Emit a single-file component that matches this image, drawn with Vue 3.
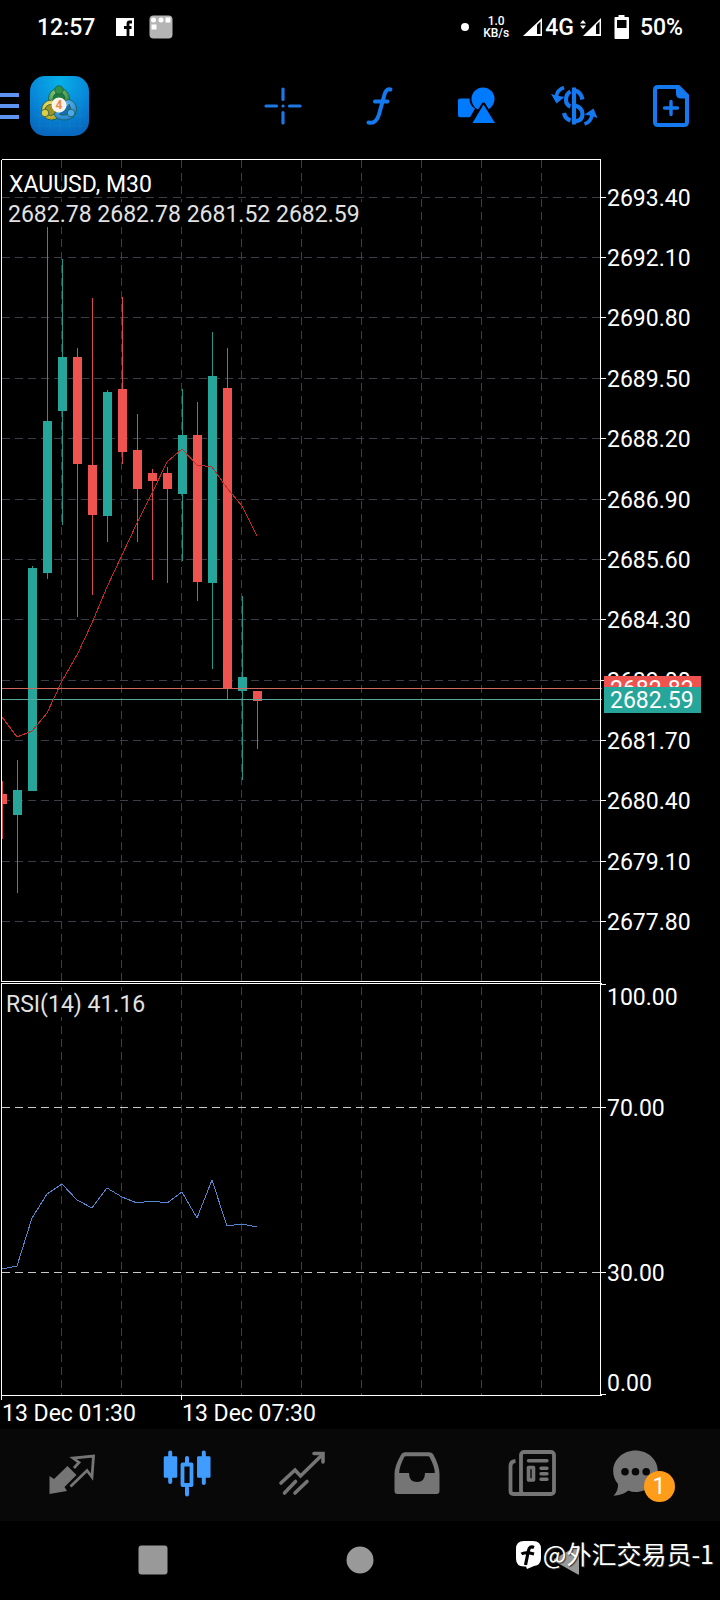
<script setup>
const UP = '#26a69a'
const DOWN = '#ef5350'

// Price scale: label and height on the chart
const prices = [
  ['2693.40', 197], ['2692.10', 257], ['2690.80', 317], ['2689.50', 378],
  ['2688.20', 438], ['2686.90', 499], ['2685.60', 559], ['2684.30', 619],
  ['2683.00', 680], ['2681.70', 740], ['2680.40', 800], ['2679.10', 861],
  ['2677.80', 921],
].map(([label, y]) => ({ label, y }))

const columns = [61, 121, 181, 241, 301, 361, 421, 481, 541]

const levels = [
  { label: '70.00', y: 1107 },
  { label: '30.00', y: 1272 },
]

// high, body top, body bottom, low, rising
const candles = [
  [781, 794, 804, 839, 0], [760, 790, 815, 893, 1], [566, 568, 791, 791, 1],
  [227, 421, 573, 579, 1], [259, 357, 411, 525, 1], [348, 357, 464, 617, 0],
  [298, 465, 515, 595, 0], [390, 392, 516, 542, 1], [297, 389, 452, 464, 0],
  [414, 450, 489, 542, 0], [469, 473, 481, 580, 0], [467, 473, 489, 583, 0],
  [389, 435, 494, 561, 1], [402, 435, 582, 601, 0], [332, 376, 583, 669, 1],
  [348, 388, 689, 699, 0], [596, 677, 691, 780, 1], [691, 691, 701, 749, 0],
].map(([high, top, bottom, low, rising], i) => ({
  x: 2 + i * 15, high, top, bottom, low, color: rising ? UP : DOWN,
}))

const average = '2,717 17,737 32,731 47,713 62,681 78,653 92,623 107,587 122,555 137,523 152,493 167,462 182,449 197,465 212,467 227,488 242,506 257,536'
const rsi = '2,1269 17,1266 32,1218 47,1194 62,1184 77,1200 92,1208 107,1188 122,1197 137,1203 152,1201 167,1203 182,1192 197,1218 212,1180 227,1226 242,1224 257,1227'
</script>

<template>
  <div class="screen">
    <div class="status">
      <span class="clock">12:57</span>
      <svg class="fb" width="18" height="18" viewBox="0 0 18 18">
        <rect width="18" height="18" fill="#fff" />
        <path d="M16 4h-2.5c-1.2 0-1.5.6-1.5 1.6V18M8 9.5h7.5" fill="none" stroke="#000" stroke-width="2.8" />
      </svg>
      <svg class="tile" width="24" height="24" viewBox="0 0 24 24">
        <rect x="0.5" y="0.5" width="23" height="23" rx="4" fill="#b5b5b5" />
        <circle cx="4.5" cy="5" r="2.5" fill="#fff" /><circle cx="12" cy="5" r="2.5" fill="#fff" />
        <rect x="16.5" y="2.5" width="5" height="5" fill="#fff" /><rect x="2.5" y="9.500" width="5" height="5" fill="#fff" />
      </svg>
      <span class="spring"></span>
      <span class="dot"></span>
      <span class="speed"><span>1.0</span><span>KB/s</span></span>
      <svg width="20" height="20" viewBox="0 0 20 20">
        <path d="M0 19L19 1v18z" fill="#fff" /><path d="M14 8l3.500-3.500V17H14z" fill="#000" />
      </svg>
      <span class="net">4G</span>
      <svg class="second" width="22" height="20" viewBox="0 0 22 20">
        <path d="M3 19L21 1v18z" fill="#fff" /><path d="M16 8l3.500-3.500V17H16z" fill="#000" />
        <path d="M0 6.500l3-3.500 3 3.500zM0 8.500l3 3.500 3-3.500z" fill="#fff" />
      </svg>
      <svg class="battery" width="16" height="24" viewBox="0 0 16 24">
        <path d="M4.500 0h6v2H14q1 0 1 1v20q0 1-1 1H1.500q-1 0-1-1V3q0-1 1-1h3z" fill="#fff" />
        <rect x="3" y="5" width="9.500" height="8" fill="#000" />
      </svg>
      <span class="percent">50%</span>
    </div>

    <header class="toolbar">
      <div class="lead">
        <button class="menu" aria-label="Menu"><i></i><i></i><i></i></button>
        <svg class="logo" width="60" height="60" viewBox="0 0 60 60">
          <defs>
            <radialGradient id="sky" cx="0.5" cy="0.1" r="0.9">
              <stop offset="0" stop-color="#06b0ea" /><stop offset="0.55" stop-color="#0788d8" /><stop offset="1" stop-color="#0767bd" />
            </radialGradient>
            <radialGradient id="leaf" cx="0.4" cy="0.3" r="0.8"><stop offset="0" stop-color="#8fd07a" /><stop offset="1" stop-color="#237c38" /></radialGradient>
            <radialGradient id="gold" cx="0.4" cy="0.3" r="0.8"><stop offset="0" stop-color="#f3e66c" /><stop offset="1" stop-color="#a9981e" /></radialGradient>
            <radialGradient id="aqua" cx="0.4" cy="0.3" r="0.8"><stop offset="0" stop-color="#7cc6f5" /><stop offset="1" stop-color="#1479c8" /></radialGradient>
          </defs>
          <rect x="0" y="0" width="59" height="60" rx="15" fill="url(#sky)" />
          <path d="M5 10H55M5 20H55M5 30H55M5 40H55M5 50H55M10 5V55M20 5V55M30 5V55M40 5V55M50 5V55" stroke="#3aa8e8" stroke-opacity="0.25" stroke-width="0.600" />
          <g stroke="#1d5a4a" stroke-width="0.800">
            <circle cx="29" cy="22.500" r="10.500" fill="url(#leaf)" />
            <circle cx="29" cy="22.500" r="6" fill="#1b7a3c" />
            <circle cx="21.500" cy="34" r="10" fill="url(#gold)" />
            <circle cx="20.500" cy="34" r="5.500" fill="#9c9226" />
            <path d="M24 38q2 6 10 6c8 0 13-5 12.500-12-.5-6-6-9.500-10-8z" fill="url(#aqua)" />
            <path d="M29 38q6 3 11-1 2-5-1-9" fill="#186fae" />
            <circle cx="29" cy="14" r="4.200" fill="#2f9148" />
            <circle cx="15" cy="37" r="3.800" fill="#dfcd45" />
            <circle cx="41" cy="37" r="3.800" fill="#4aa9ec" />
          </g>
          <circle cx="29" cy="29" r="7.500" fill="#f7f2ec" />
          <text x="29" y="33" text-anchor="middle" class="four">4</text>
        </svg>
      </div>
      <nav class="tools">
        <button aria-label="Crosshair">
          <svg width="48" height="48" viewBox="0 0 48 48" fill="none" stroke="#1d78e4" stroke-width="3.200" stroke-linecap="round">
            <path d="M24 7v10.500M24 30.500v10.500M7 24h10.500M30.500 24h10.500M24 24h.1" />
          </svg>
        </button>
        <button aria-label="Indicators">
          <svg width="48" height="48" viewBox="0 0 48 48" fill="none" stroke="#1478ee" stroke-width="4" stroke-linecap="round">
            <path d="M34.500 7.500C31 6.500 29.500 9 28.500 12.500L23 32.500C21 39 18 42 12.500 40.500M19 19.500H31.500" />
          </svg>
        </button>
        <button aria-label="Objects">
          <svg width="48" height="48" viewBox="0 0 48 48" fill="#007aff">
            <path d="M7 16.500h9.500q0 7 5.500 10l-4.500 8q-.5.800-1.500.800H7q-2 0-2-2v-15q0-1.800 2-1.800z" />
            <circle cx="30" cy="17" r="11.500" />
            <path d="M30.500 22.500L42 41H19.500z" stroke="#000" stroke-width="4" paint-order="stroke" stroke-linejoin="round" />
          </svg>
        </button>
        <button aria-label="Trade">
          <svg width="48" height="48" viewBox="0 0 48 48" fill="none" stroke="#1478ee" stroke-width="4.200">
            <path d="M24 5.500v37M25 8.500q6 1.500 7.500 9M20.500 9.500q-4.500 2.500-4.500 8t4.500 7M25 23.500q7.500 2 7.500 8.500T25 39.500M14 31q1 5.500 6.500 7.500" />
            <path d="M14 5.500Q7 8 6.500 14" stroke-width="3.600" /><path d="M1 12l5.500 1.500 8 1.500-8 6.500z" fill="#1478ee" stroke="none" />
            <path d="M34.500 42q6.500-2 7.500-9" stroke-width="3.600" /><path d="M34.500 32.500L43.500 26.500l4 9.500-6-2z" fill="#1478ee" stroke="none" />
          </svg>
        </button>
        <button aria-label="New order">
          <svg width="48" height="48" viewBox="0 0 48 48" fill="none" stroke="#1478ee" stroke-width="3">
            <path d="M11 5H31.500L40 13.500V40q0 3-3 3H11q-3 0-3-3V8q0-3 3-3z" stroke-width="4" />
            <path d="M29 4.500h3L40.500 13v3.500H34q-5 0-5-5z" fill="#1478ee" stroke="none" />
            <path d="M24 19.500v13M17.500 26h13" stroke-width="3.400" stroke-linecap="round" />
          </svg>
        </button>
      </nav>
    </header>

    <svg class="chart" viewBox="0 156 720 1273">
      <g class="grid">
        <path v-for="p in prices" :key="p.y" :d="`M2 ${p.y + 0.5}H600`" />
        <path v-for="x in columns" :key="x" :d="`M${x + 0.5} 160V1395`" />
      </g>
      <path v-for="l in levels" :key="l.y" class="level" :d="`M2 ${l.y + 0.5}H600`" />

      <g v-for="c in candles" :key="c.x" :fill="c.color">
        <rect class="wick" :x="c.x" :y="c.high" width="1" :height="c.low - c.high" />
        <rect :x="Math.max(c.x - 4, 2)" :y="c.top" :width="c.x > 4 ? 9 : 5" :height="c.bottom - c.top" />
      </g>
      <path class="bid" d="M2 699.5H602" />
      <path class="ask" d="M2 688.5H602" />
      <polyline class="average" :points="average" />
      <polyline class="rsi" :points="rsi" />

      <rect x="7" y="202" width="361" height="25" />
      <rect x="4" y="991" width="150" height="26" />
      <text x="9" y="192" class="strong">XAUUSD, M30</text>
      <text x="8" y="222" class="soft">2682.78 2682.78 2681.52 2682.59</text>
      <text x="6" y="1012" class="soft">RSI(14) 41.16</text>

      <path class="frame" d="M1.5 159.5H601M1.5 159.500V981.500H601M1.5 1400V983.500H602M600.5 160V1395.500M1 1395.500H602M181.500 1396V1400M601 984.500H606M601 1394.500H606" />

      <g v-for="p in prices" :key="p.label">
        <path class="frame" :d="`M601 ${p.y + 0.5}H606`" />
        <text x="607" :y="p.y + 9">{{ p.label }}</text>
      </g>
      <g v-for="l in levels" :key="l.label">
        <path class="frame" :d="`M601 ${l.y + 0.5}H606`" />
        <text x="607" :y="l.y + 9">{{ l.label }}</text>
      </g>
      <text x="607" y="1005">100.00</text>
      <text x="607" y="1391">0.00</text>

      <rect x="604" y="676" width="97" height="26" :fill="DOWN" />
      <text x="610" y="697">2682.83</text>
      <rect x="604" y="687" width="97" height="26" :fill="UP" />
      <text x="610" y="708">2682.59</text>

      <text x="2" y="1421">13 Dec 01:30</text>
      <text x="182" y="1421">13 Dec 07:30</text>
    </svg>

    <nav class="tabs">
      <button aria-label="Quotes">
        <svg width="48" height="48" viewBox="0 0 48 48">
          <path d="M19.500 16L28.500 25 16.500 37l2.500 4L1.500 44V26L6 29z" fill="#757575" />
          <path d="M22.500 36.500L39 20.500l5 6.500L45.500 6 25 8l6 4.500-5 5.500" fill="none" stroke="#757575" stroke-width="2.800" />
        </svg>
      </button>
      <button aria-label="Charts">
        <svg width="48" height="48" viewBox="0 0 48 48" fill="#409cff" stroke="#409cff" stroke-linecap="round">
          <path d="M7.200 2.500V32M40.800 2.500V33M24 8v5M24 38v6.500" stroke-width="4" />
          <rect x="1.500" y="7" width="12" height="20" rx="0.500" stroke-width="1.500" /><rect x="34.800" y="7" width="12" height="20" rx="0.500" stroke-width="1.500" />
          <rect x="19.500" y="14.500" width="9" height="20.500" fill="none" stroke-width="3.800" stroke-linejoin="round" />
        </svg>
      </button>
      <button aria-label="Trade">
        <svg width="48" height="48" viewBox="0 0 48 48" fill="none" stroke="#757575" stroke-width="3.600" stroke-linecap="round">
          <path d="M3 33L17 20l5.500 6L44 5" /><path d="M36 3.500h9V12" />
          <path d="M6.500 43L17.500 31.500M17 43L29 31.500" />
        </svg>
      </button>
      <button aria-label="History">
        <svg width="48" height="48" viewBox="0 0 48 48" fill="#757575" fill-rule="evenodd">
          <path d="M12 2.300H36.500q3 0 4 2.500Q46.500 16 46.500 24V41q0 3-3 3H4.500q-3 0-3-3V24Q1.500 16 8 4.800 9 2.300 12 2.300zM13 6.300q-1.500 0-2 1.200Q6.200 17 6.200 23H16q0 9 8 9t8-9h9.800q0-6-5-15.500-.5-1.200-2-1.200z" />
        </svg>
      </button>
      <button aria-label="News">
        <svg width="48" height="48" viewBox="0 0 48 48" fill="none" stroke="#757575" stroke-width="3.800">
          <rect x="13" y="2" width="33" height="42" rx="3" /><path d="M7.500 11q-5 .5-5 5V41q0 3 3 3H15" />
          <path d="M20.500 10.700H39M33 18.300h6M33 23.700h6M33 29.300h6" stroke-width="3.400" stroke-linecap="round" />
          <rect x="20.500" y="17.500" width="5" height="12.500" stroke-width="3.600" stroke-linejoin="round" />
        </svg>
      </button>
      <button aria-label="Messages">
        <span class="chat">
          <svg width="48" height="48" viewBox="0 0 48 48" fill="#757575">
            <path d="M23.500.5C36 .5 45.800 9.500 45.800 21S36 42 23.500 42q-4 0-7-1.500Q10 45.500 1.500 45.700 6.500 41 6 34 1.200 28.500 1.200 21C1.200 9.500 11 .5 23.500.5z" />
            <g fill="#080808"><circle cx="13" cy="21.700" r="3.800" /><circle cx="23.500" cy="21.700" r="3.800" /><circle cx="34.200" cy="21.700" r="3.800" /></g>
          </svg>
          <span class="badge">1</span>
        </span>
      </button>
    </nav>

    <div class="system">
      <button aria-label="Recents"><svg width="30" height="30" viewBox="0 0 30 30"><rect x="0.500" y="0.500" width="29" height="29" rx="3" fill="#999" /></svg></button>
      <button aria-label="Home"><svg width="30" height="30" viewBox="0 0 30 30"><circle cx="15" cy="15" r="13.500" fill="#999" /></svg></button>
      <button aria-label="Back"><svg width="30" height="30" viewBox="0 0 30 30"><path d="M27 1.500V29q0 1-1 .5L2 16q-1-1 0-2L26 .5q1-.5 1 1z" fill="#999" /></svg></button>
      <div class="credit">
        <svg width="25" height="28" viewBox="0 0 25 28">
          <path d="M8 0H17q8 0 8 8V17q0 7-7 8l-7 3-1-2.500H8q-8 0-8-8V8Q0 0 8 0z" fill="#fff" />
          <path d="M18 6.500Q13.500 4.500 12.500 9.500L9.500 24M5.500 13Q9 10.500 18 13" fill="none" stroke="#000" stroke-width="3.200" />
        </svg>
        <span>@外汇交易员-1</span>
      </div>
    </div>
  </div>
</template>

<style>
body {
  background: #000;
}
</style>

<style scoped>
.screen {
  background: #000;
  color: #fff;
  font-family: Roboto, "Liberation Sans", sans-serif;
  font-size: 23px;
  overflow: hidden;
}
button {
  display: flex;
  align-items: center;
  justify-content: center;
  margin: 0;
  padding: 0;
  border: 0;
  background: none;
  color: inherit;
  font: inherit;
}
svg {
  display: block;
  flex: none;
}
.status {
  display: flex;
  align-items: center;
  height: 54px;
  padding: 0 37px;
  font-weight: 500;
}
.fb {
  margin-left: 21px;
}
.tile {
  margin-left: 15px;
}
.spring {
  flex: 1;
}
.dot {
  width: 8px;
  height: 8px;
  border-radius: 50%;
  background: #fff;
}
.speed {
  display: flex;
  flex-direction: column;
  align-items: center;
  margin: 0 14px;
  font-size: 12px;
  line-height: 12px;
}
.net {
  margin-left: 2px;
}
.second {
  margin-left: 6px;
}
.battery {
  margin: 0 10px 0 12px;
}
.toolbar {
  display: flex;
  align-items: center;
  height: 102px;
  padding-top: 2px;
  box-sizing: border-box;
}
.lead {
  display: flex;
  align-items: center;
  width: 234px;
}
.menu {
  flex-direction: column;
  gap: 7px;
  width: 19px;
  margin-right: 11px;
}
.menu i {
  width: 19px;
  height: 4px;
  background: #5f93f2;
}
.four {
  font: 700 12px Roboto, sans-serif;
  fill: #f08a3c;
}
.tools {
  display: flex;
  flex: 1;
}
.tools button {
  flex: 1;
}
.chart {
  width: 100%;
  height: auto;
}
.chart text {
  font-size: 23px;
  fill: #fff;
}
.chart .soft {
  fill: #e2e2e2;
}
.chart path {
  fill: none;
  shape-rendering: crispEdges;
}
.grid {
  stroke: #3c3c46;
  stroke-dasharray: 8 5.12;
}
.level {
  stroke: #c8c8c8;
  stroke-dasharray: 8 5.12;
}
.frame {
  stroke: #fff;
}
.wick {
  opacity: 0.9;
}
.bid {
  stroke: #58a79c;
}
.ask {
  stroke: #d0685e;
}
.average {
  fill: none;
  stroke: #c62a20;
  shape-rendering: crispEdges;
}
.rsi {
  fill: none;
  stroke: #5585cc;
  shape-rendering: crispEdges;
}
.tabs {
  display: flex;
  height: 92px;
  padding: 0 16px 2px 14px;
  box-sizing: border-box;
  background: #080808;
}
.tabs button {
  flex: 1;
}
.chat {
  position: relative;
  width: 70px;
}
.badge {
  position: absolute;
  left: 32px;
  top: 21px;
  width: 31px;
  height: 31px;
  border-radius: 50%;
  background: #ff9c1a;
  line-height: 31px;
  text-align: center;
}
.system {
  position: relative;
  display: flex;
  align-items: center;
  justify-content: space-between;
  height: 79px;
  padding: 0 138px 1px;
  box-sizing: border-box;
}
.credit {
  position: absolute;
  right: 6px;
  top: 14px;
  display: flex;
  align-items: center;
  gap: 2px;
  font: 25px/36px "Noto Sans CJK SC", sans-serif;
  text-shadow: 1px 1px 1px #333;
  white-space: nowrap;
}
.credit svg {
  margin-top: 4px;
}
</style>
